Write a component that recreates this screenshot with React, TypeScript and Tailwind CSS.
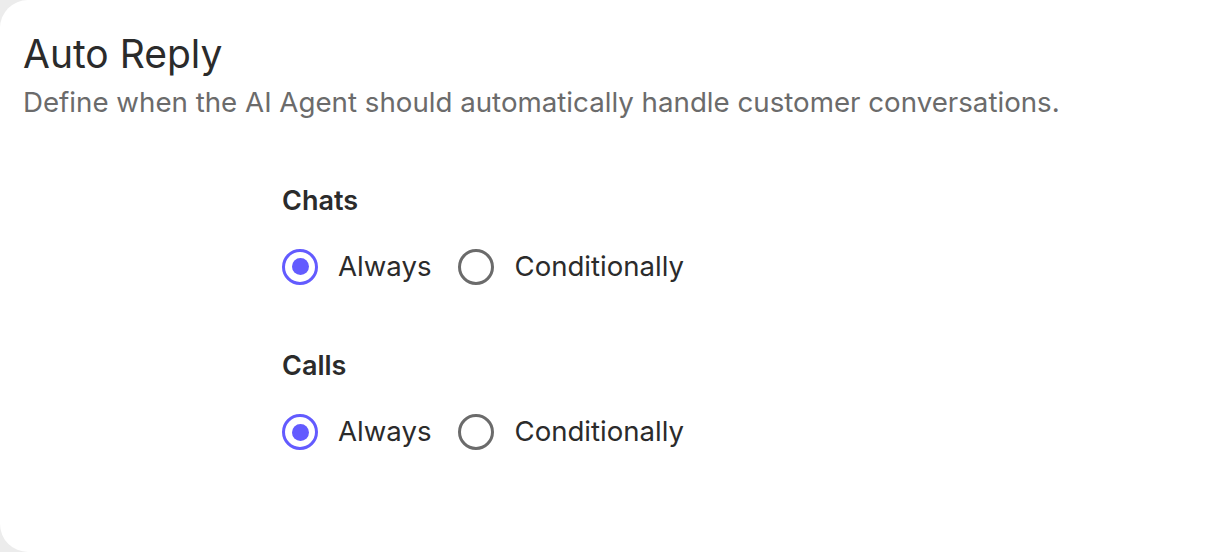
import { useState } from 'react'

type Choice = 'always' | 'conditionally'

function Radio({ checked, label, onClick }: { checked: boolean; label: string; onClick: () => void }) {
  return (
    <button type="button" onClick={onClick} className="flex items-center gap-[20px] cursor-pointer">
      <span
        className={
          checked
            ? 'flex h-[36px] w-[36px] items-center justify-center rounded-full border-[3px] border-[#635bff]'
            : 'flex h-[36px] w-[36px] items-center justify-center rounded-full border-[3px] border-[#6b6b6b]'
        }
      >
        {checked && <span className="h-[17px] w-[17px] rounded-full bg-[#635bff]" />}
      </span>
      <span className="text-[27.6px] text-[#2b2b2b]">{label}</span>
    </button>
  )
}

function Group({ title }: { title: string }) {
  const [value, setValue] = useState<Choice>('always')
  return (
    <div className="flex flex-col">
      <div className="text-[27px] font-semibold leading-[34px] text-[#2b2b2b]">{title}</div>
      <div className="mt-[28px] flex items-center gap-[27px]">
        <Radio checked={value === 'always'} label="Always" onClick={() => setValue('always')} />
        <Radio checked={value === 'conditionally'} label="Conditionally" onClick={() => setValue('conditionally')} />
      </div>
    </div>
  )
}

export default function App() {
  return (
    <div className="h-[552px] w-[1214px] overflow-hidden bg-[#ececec] font-['Inter',sans-serif]">
      <div className="h-[552px] w-[1260px] rounded-[28px] bg-white px-[23px] pt-[28px]">
        <h1 className="text-[39px] leading-[52px] text-[#2b2b2b]">Auto Reply</h1>
        <p className="mt-[4px] text-[27.7px] leading-[36px] text-[#6b6b6b]">
          Define when the AI Agent should automatically handle customer conversations.
        </p>
        <div className="ml-[259px] mt-[64px] flex flex-col gap-[62px]">
          <Group title="Chats" />
          <Group title="Calls" />
        </div>
      </div>
    </div>
  )
}
